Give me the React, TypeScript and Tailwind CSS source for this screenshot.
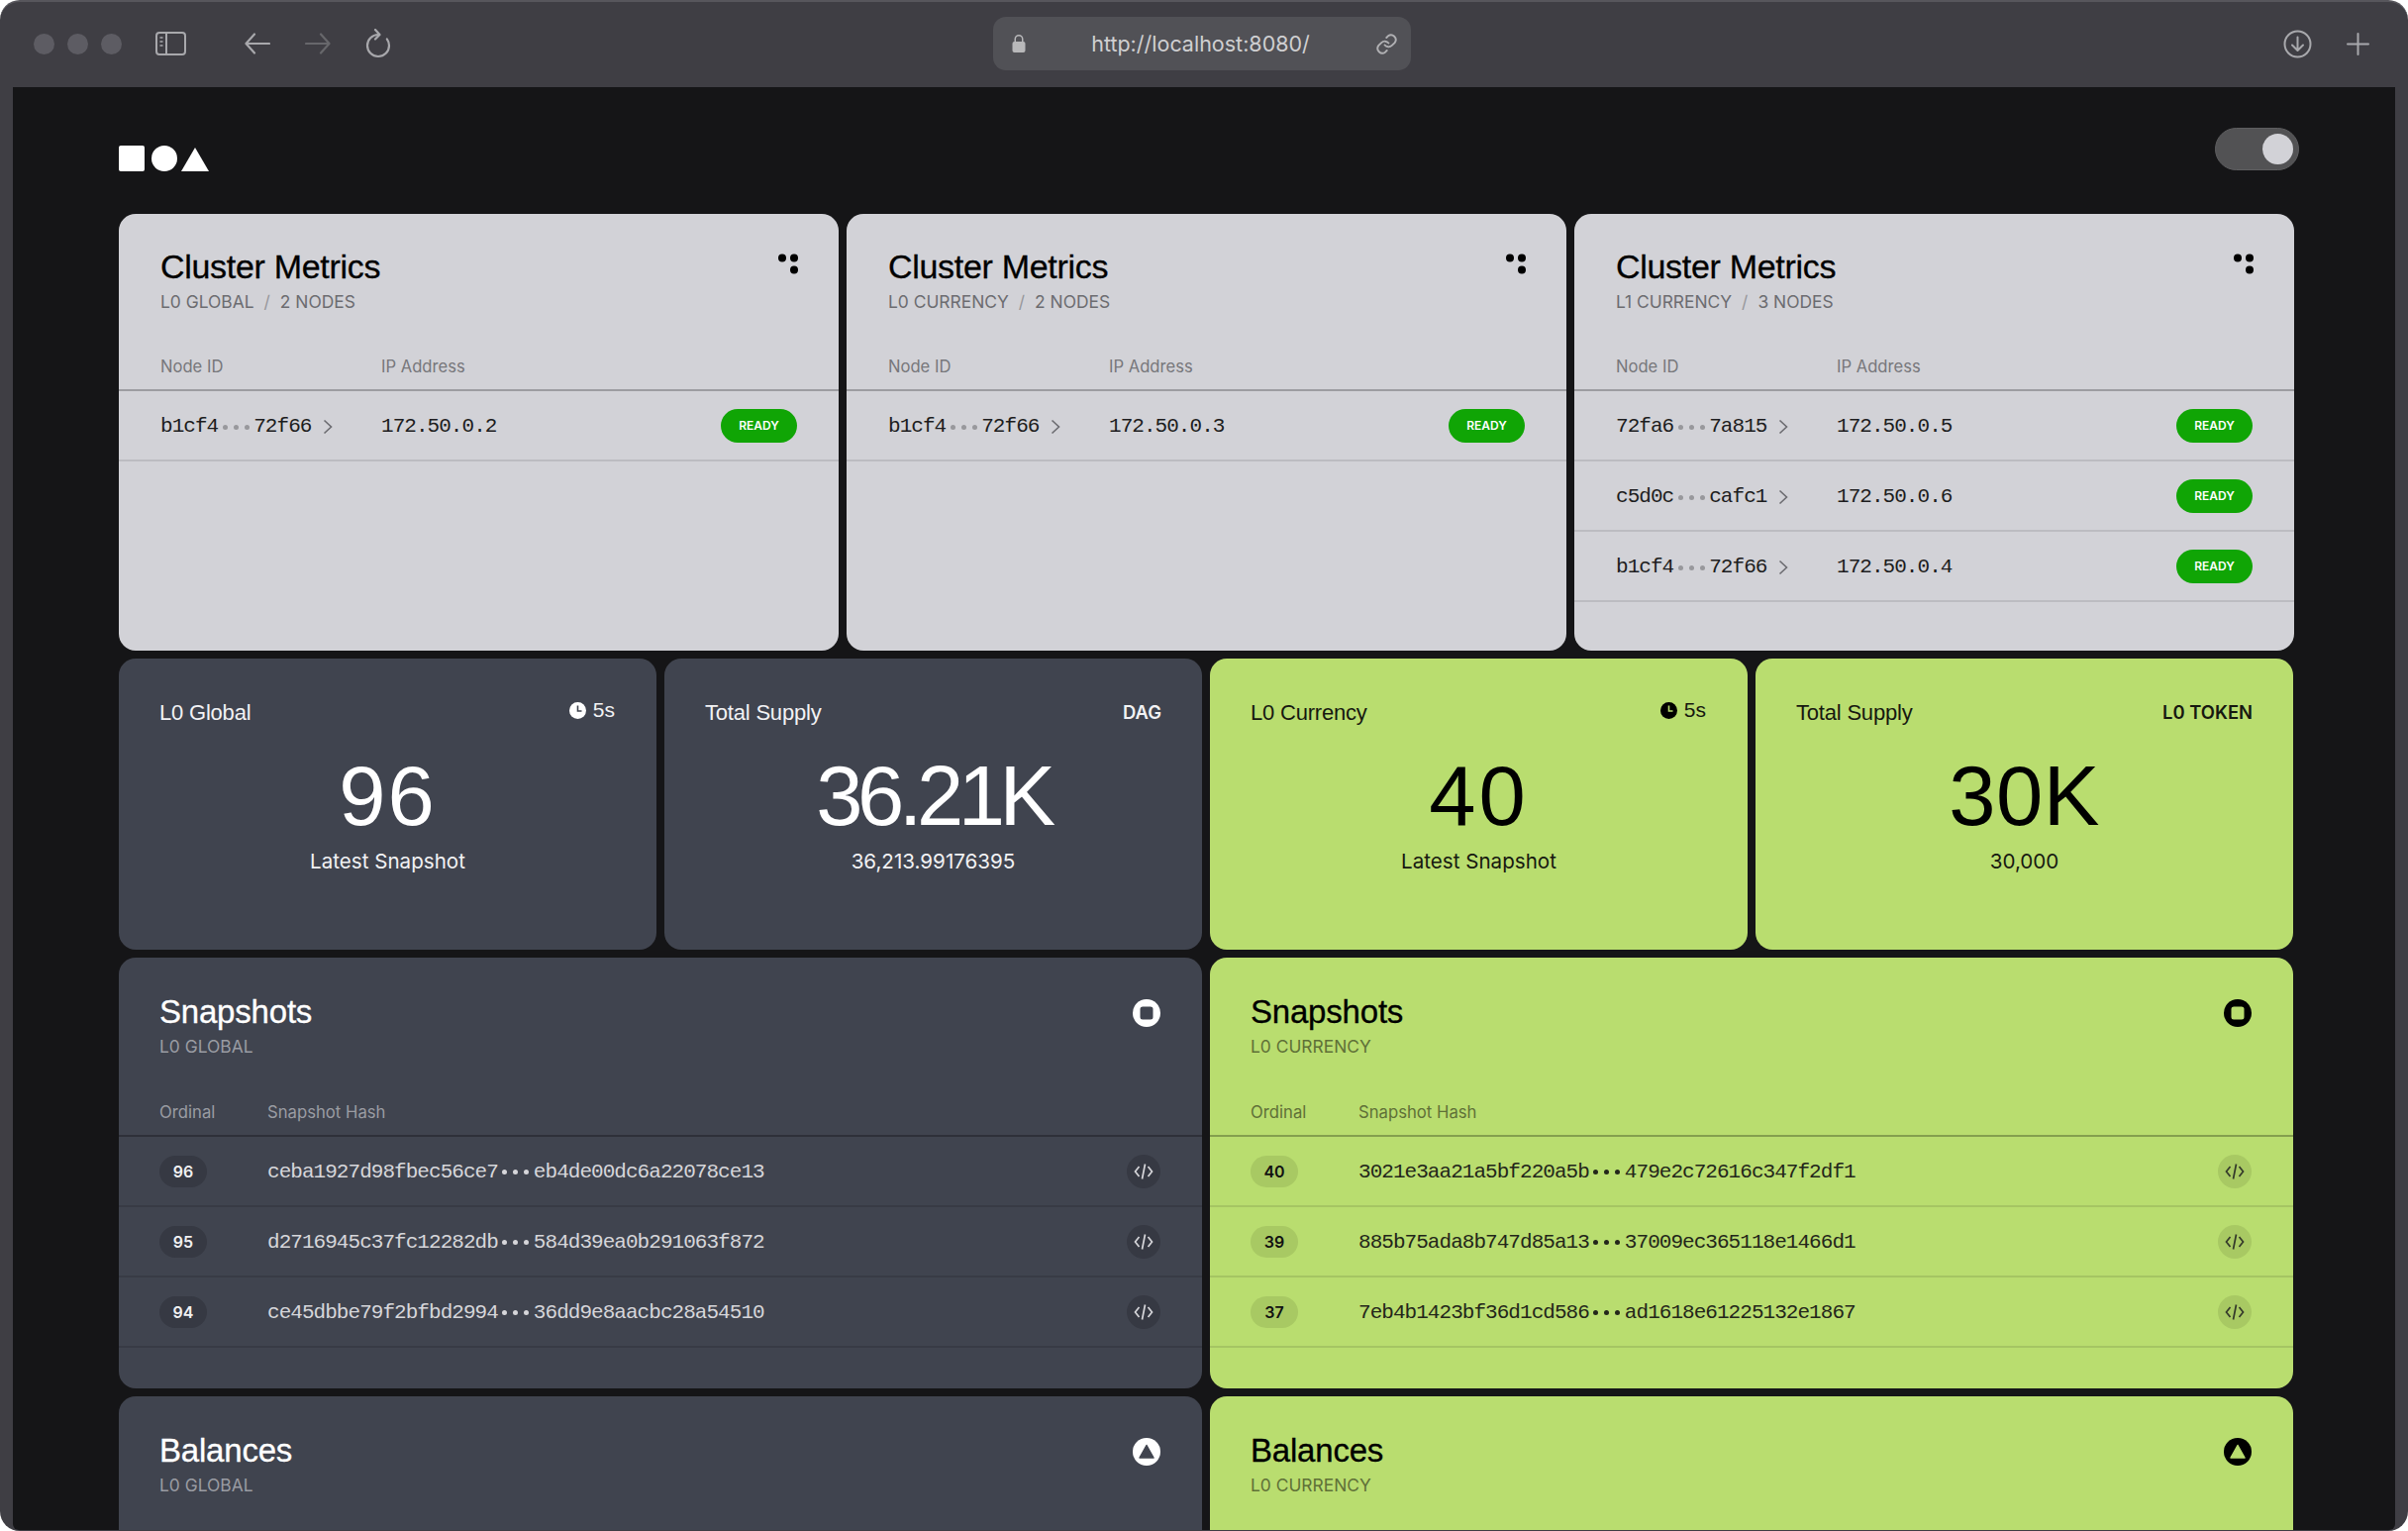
import React from 'react';

const sans = "font-['Liberation_Sans',Arial,sans-serif]";
const ui = "font-['Inter',sans-serif]";
const mono = "font-['Liberation_Mono',monospace]";
const monoText = `${mono} text-[21px] tracking-[-0.96px]`;
const heavy = '[-webkit-text-stroke:0.3px_currentColor]';

type Tone = 'dark' | 'green';

const tones = {
  dark: {
    card: 'bg-[#40444f]',
    title: 'text-white',
    label: 'text-[#f2f2f4]',
    sub: 'text-[#9a9ca3]',
    head: 'border-[#2e3039]',
    row: 'border-[#383b45]',
    pill: 'bg-[#363943] text-[#f0f0f2]',
    hash: 'text-[#d6d6da]',
    btn: 'bg-[#363943] text-[#d6d6da]',
    icon: '#ffffff',
    hole: '#40444f',
  },
  green: {
    card: 'bg-[#b9dd6f]',
    title: 'text-black',
    label: 'text-[#16180f]',
    sub: 'text-[#5f7037]',
    head: 'border-[#849f4e]',
    row: 'border-[#a5c563]',
    pill: 'bg-[#a8c963] text-[#111]',
    hash: 'text-[#23261a]',
    btn: 'bg-[#a8c963] text-[#33382a]',
    icon: '#000000',
    hole: '#b9dd6f',
  },
};

const clusters = [
  { tag: 'L0 GLOBAL', count: '2 NODES', rows: [['b1cf4', '72f66', '172.50.0.2']] },
  { tag: 'L0 CURRENCY', count: '2 NODES', rows: [['b1cf4', '72f66', '172.50.0.3']] },
  {
    tag: 'L1 CURRENCY',
    count: '3 NODES',
    rows: [
      ['72fa6', '7a815', '172.50.0.5'],
      ['c5d0c', 'cafc1', '172.50.0.6'],
      ['b1cf4', '72f66', '172.50.0.4'],
    ],
  },
];

const snapshots: Record<Tone, [string, string, string][]> = {
  dark: [
    ['96', 'ceba1927d98fbec56ce7', 'eb4de00dc6a22078ce13'],
    ['95', 'd2716945c37fc12282db', '584d39ea0b291063f872'],
    ['94', 'ce45dbbe79f2bfbd2994', '36dd9e8aacbc28a54510'],
  ],
  green: [
    ['40', '3021e3aa21a5bf220a5b', '479e2c72616c347f2df1'],
    ['39', '885b75ada8b747d85a13', '37009ec365118e1466d1'],
    ['37', '7eb4b1423bf36d1cd586', 'ad1618e61225132e1867'],
  ],
};

const Dots = ({ className }: { className: string }) => (
  <span className={`inline-flex w-[36px] justify-center gap-[6px] ${className}`}>
    <i className="w-[5px] h-[5px] rounded-full bg-current" />
    <i className="w-[5px] h-[5px] rounded-full bg-current" />
    <i className="w-[5px] h-[5px] rounded-full bg-current" />
  </span>
);

const BrowserBar = () => (
  <div className="h-[86px] pb-[2px] flex items-center relative text-[#a8a8ac] shrink-0">
    <div className="flex gap-[13px] ml-[34px]">
      <span className="w-[21px] h-[21px] rounded-full bg-[#5d5c63]" />
      <span className="w-[21px] h-[21px] rounded-full bg-[#5d5c63]" />
      <span className="w-[21px] h-[21px] rounded-full bg-[#5d5c63]" />
    </div>
    <svg className="ml-[34px]" width="31" height="24" viewBox="0 0 31 24" fill="none" stroke="currentColor" strokeWidth="2">
      <rect x="1" y="1" width="29" height="22" rx="3" />
      <path d="M11 1v22" />
      <path d="M4.500 6h3M4.500 10h3M4.500 14h3" strokeWidth="1.600" />
    </svg>
    <svg className="ml-[59px]" width="26" height="22" viewBox="0 0 26 22" fill="none" stroke="currentColor" strokeWidth="2.200" strokeLinecap="round" strokeLinejoin="round">
      <path d="M25 11H2M10 1.500 1.500 11l8.500 9.500" />
    </svg>
    <svg className="ml-[35px] text-[#67676b]" width="26" height="22" viewBox="0 0 26 22" fill="none" stroke="currentColor" strokeWidth="2.200" strokeLinecap="round" strokeLinejoin="round">
      <path d="M1 11h23M16 1.500 24.500 11 16 20.500" />
    </svg>
    <svg className="ml-[35px]" width="26" height="30" viewBox="0 0 26 30" fill="none" stroke="currentColor" strokeWidth="2.200" strokeLinecap="round" strokeLinejoin="round">
      <path d="M13 6a11 11 0 1 0 11 11c0-2.500-.8-4.800-2.200-6.700" />
      <path d="M10 1l4.500 5L10 10.500" />
    </svg>
    <div className="absolute left-[1003px] top-[15px] w-[422px] h-[54px] rounded-[13px] bg-[#515156] flex items-center justify-center">
      <svg className="absolute left-[19px] top-[17px]" width="14" height="20" viewBox="0 0 14 20" fill="#b8b8ba">
        <path d="M2.500 8V5.500a4.500 4.500 0 0 1 9 0V8H10V5.500a3 3 0 0 0-6 0V8z" />
        <rect x="0.500" y="8" width="13" height="11" rx="2" />
      </svg>
      <span className={`${ui} text-[21.500px] text-[#cfcfd1] -ml-[3px]`}>http://localhost:8080/</span>
      <svg className="absolute right-[13px] top-[16px]" width="23" height="23" viewBox="0 0 24 24" fill="none" stroke="#b0b0b3" strokeWidth="2" strokeLinecap="round">
        <path d="M10 13a5 5 0 0 0 7.500.5l3-3a5 5 0 0 0-7-7l-1.700 1.700" />
        <path d="M14 11a5 5 0 0 0-7.500-.5l-3 3a5 5 0 0 0 7 7l1.700-1.700" />
      </svg>
    </div>
    <svg className="absolute left-[2306px] top-[28px]" width="29" height="29" viewBox="0 0 29 29" fill="none" stroke="currentColor" strokeWidth="2" strokeLinecap="round" strokeLinejoin="round">
      <circle cx="14.500" cy="14.500" r="13" />
      <path d="M14.500 7.500v13M9 15.500l5.500 5.500 5.500-5.500" />
    </svg>
    <svg className="absolute left-[2370px] top-[31px]" width="23" height="23" viewBox="0 0 23 23" stroke="currentColor" strokeWidth="2" strokeLinecap="round">
      <path d="M11.500 1v21M1 11.500h21" />
    </svg>
  </div>
);

const Logo = () => (
  <div className="flex items-end gap-[7px]">
    <span className="w-[26px] h-[26px] rounded-[2px] bg-white" />
    <span className="w-[26px] h-[26px] rounded-full bg-white" />
    <svg width="28" height="24" viewBox="0 0 28 24" className="-ml-[3px]">
      <path d="M14 0 28 24H0z" fill="#fff" />
    </svg>
  </div>
);

const Chevron = () => (
  <svg width="10" height="16" viewBox="0 0 10 16" fill="none" stroke="#6b6b70" strokeWidth="1.600">
    <path d="M1.500 1.500 8.500 8l-7 6.500" />
  </svg>
);

const ClusterCard = ({ tag, count, rows }: (typeof clusters)[number]) => (
  <div className="bg-[#d2d2d7] rounded-[17px] h-[441px] relative">
    <div className="pt-[33px] px-[42px] h-[136px]">
      <h2 className={`${sans} ${heavy} text-[34px] leading-[40px] tracking-[-0.3px] text-black`}>Cluster Metrics</h2>
      <div className={`${ui} text-[17.400px] leading-[20px] mt-[6px] text-[#6c6c70] flex gap-[10px]`}>
        <span>{tag}</span>
        <span className="text-[#97979b]">/</span>
        <span>{count}</span>
      </div>
    </div>
    <svg className="absolute right-[41px] top-[40px]" width="20" height="21" viewBox="0 0 20 21" fill="#000">
      <circle cx="4" cy="4.500" r="4" />
      <circle cx="16" cy="4.500" r="4" />
      <circle cx="16" cy="16.500" r="4" />
    </svg>
    <div className={`${ui} text-[16.600px] text-[#77777b] h-[43px] px-[42px] flex items-start border-b-2 border-[#9d9da1]`}>
      <span className="w-[223px] leading-[36px]">Node ID</span>
      <span className="leading-[36px]">IP Address</span>
    </div>
    {rows.map((r) => (
      <div key={r[2]} className="h-[71px] px-[42px] flex items-center border-b-2 border-[#bcbcc1]">
        <div className={`${monoText} text-[#1d1d20] w-[223px] flex items-center pt-[3px]`}>
          <span>{r[0]}</span>
          <Dots className="text-[#98989c]" />
          <span>{r[1]}</span>
          <span className="ml-[12px] flex"><Chevron /></span>
        </div>
        <span className={`${monoText} text-[#1d1d20] pt-[3px]`}>{r[2]}</span>
        <span className={`${ui} ml-auto w-[77px] h-[34px] rounded-full bg-[#10a505] text-white text-[12px] font-semibold flex items-center justify-center`}>READY</span>
      </div>
    ))}
  </div>
);

const Clock = ({ color, hole }: { color: string; hole: string }) => (
  <svg width="17" height="17" viewBox="0 0 17 17">
    <circle cx="8.500" cy="8.500" r="8.500" fill={color} />
    <path d="M8.500 3.500v5.500h4" fill="none" stroke={hole} strokeWidth="1.600" />
  </svg>
);

const StatCard = ({ tone, title, right, value, valueTrack, caption, timer }: { tone: Tone; title: string; right: string; value: string; valueTrack: string; caption: string; timer?: boolean }) => {
  const t = tones[tone];
  return (
    <div className={`${t.card} rounded-[17px] h-[294px] relative flex flex-col items-center`}>
      <div className={`${sans} absolute left-[41px] top-[41px] text-[22px] leading-[28px] tracking-[-0.200px] ${t.label}`}>{title}</div>
      {timer ? (
        <div className={`absolute right-[42px] top-[39px] flex items-center gap-[7px] text-[21px] leading-[26px] ${sans} ${t.label}`}>
          <Clock color={tone === 'dark' ? '#fff' : '#000'} hole={t.hole} />
          <span>{right}</span>
        </div>
      ) : (
        <div className={`${ui} absolute right-[41px] top-[40px] text-[18.400px] leading-[28px] font-semibold ${t.label}`}>{right}</div>
      )}
      <div className={`${sans} text-[85px] leading-[96px] mt-[91px] ${valueTrack} ${t.title}`}>{value}</div>
      <div className={`${ui} text-[20.600px] leading-[28px] mt-[4px] ${t.label}`}>{caption}</div>
    </div>
  );
};

const CardHead = ({ tone, title, sub, shape }: { tone: Tone; title: string; sub: string; shape: 'square' | 'triangle' }) => {
  const t = tones[tone];
  return (
    <div className="relative pt-[35px] px-[41px]">
      <h2 className={`${sans} ${heavy} text-[33px] leading-[40px] tracking-[-0.200px] ${t.title}`}>{title}</h2>
      <div className={`${ui} text-[17.400px] leading-[20px] mt-[5px] ${t.sub}`}>{sub}</div>
      <svg className="absolute right-[42px] top-[42px]" width="28" height="28" viewBox="0 0 28 28">
        <circle cx="14" cy="14" r="14" fill={t.icon} />
        {shape === 'square' ? (
          <rect x="7.500" y="7.500" width="13" height="13" rx="2.500" fill={t.hole} />
        ) : (
          <path d="M14 7.500 21 20H7z" fill={t.hole} stroke={t.hole} strokeWidth="1.500" strokeLinejoin="round" />
        )}
      </svg>
    </div>
  );
};

const SnapshotsCard = ({ tone, sub }: { tone: Tone; sub: string }) => {
  const t = tones[tone];
  return (
    <div className={`${t.card} rounded-[17px] h-[435px]`}>
      <CardHead tone={tone} title="Snapshots" sub={sub} shape="square" />
      <div className={`${ui} mt-[33px] pt-[11px] text-[16.700px] leading-[24px] h-[48px] px-[41px] flex border-b-2 ${t.head} ${t.sub}`}>
        <span className="w-[109px]">Ordinal</span>
        <span>Snapshot Hash</span>
      </div>
      {snapshots[tone].map((r) => (
        <div key={r[0]} className={`h-[71px] pl-[41px] pr-[42px] flex items-center border-b-2 ${t.row}`}>
          <span className={`${ui} w-[48px] h-[32px] rounded-full text-[16px] font-semibold flex items-center justify-center ${t.pill}`}>{r[0]}</span>
          <div className={`${monoText} ml-[61px] pt-[2px] flex items-center ${t.hash}`}>
            <span>{r[1]}</span>
            <Dots className={t.hash} />
            <span>{r[2]}</span>
          </div>
          <span className={`ml-auto w-[34px] h-[34px] rounded-full flex items-center justify-center ${t.btn}`}>
            <svg width="20" height="18" viewBox="0 0 20 18" fill="none" stroke="currentColor" strokeWidth="1.700">
              <path d="M5.500 4 1.500 9l4 5M14.500 4l4 5-4 5M11.500 1.500l-3 15" />
            </svg>
          </span>
        </div>
      ))}
    </div>
  );
};

const BalancesCard = ({ tone, sub }: { tone: Tone; sub: string }) => (
  <div className={`${tones[tone].card} rounded-t-[17px] h-[135px] overflow-hidden`}>
    <CardHead tone={tone} title="Balances" sub={sub} shape="triangle" />
  </div>
);

export default function App() {
  return (
    <div className="w-[2432px] h-[1546px] bg-white overflow-hidden">
      <div className="w-full h-full bg-[#3f3e44] rounded-[20px] border-t-2 border-[#57565c] flex flex-col overflow-hidden">
        <BrowserBar />
        <main className="flex-1 min-h-0 mx-[13px] mb-[1px] bg-[#151517] overflow-hidden rounded-b-[6px] pl-[107px] pr-[102px]">
          <div className="h-[128px] flex items-start justify-between relative">
            <div className="mt-[59px]"><Logo /></div>
            <div className="mt-[41px] w-[85px] h-[43px] rounded-full bg-[#525254] border border-[#5e5e60] flex items-center justify-end pr-[5px] -mr-[5px]">
              <span className="w-[31px] h-[31px] rounded-full bg-[#d2d2d7]" />
            </div>
          </div>
          <div className="flex flex-col gap-[8px]">
            <div className="grid grid-cols-3 gap-[8px]">
              {clusters.map((c) => <ClusterCard key={c.tag} {...c} />)}
            </div>
            <div className="grid grid-cols-4 gap-[8px] pr-[1px]">
              <StatCard tone="dark" title="L0 Global" right="5s" value="96" valueTrack="tracking-[2px]" caption="Latest Snapshot" timer />
              <StatCard tone="dark" title="Total Supply" right="DAG" value="36.21K" valueTrack="tracking-[-5.500px]" caption="36,213.99176395" />
              <StatCard tone="green" title="L0 Currency" right="5s" value="40" valueTrack="tracking-[3px]" caption="Latest Snapshot" timer />
              <StatCard tone="green" title="Total Supply" right="L0 TOKEN" value="30K" valueTrack="tracking-[0.5px]" caption="30,000" />
            </div>
            <div className="grid grid-cols-2 gap-[8px] pr-[1px]">
              <SnapshotsCard tone="dark" sub="L0 GLOBAL" />
              <SnapshotsCard tone="green" sub="L0 CURRENCY" />
            </div>
            <div className="grid grid-cols-2 gap-[8px] pr-[1px]">
              <BalancesCard tone="dark" sub="L0 GLOBAL" />
              <BalancesCard tone="green" sub="L0 CURRENCY" />
            </div>
          </div>
        </main>
      </div>
    </div>
  );
}
